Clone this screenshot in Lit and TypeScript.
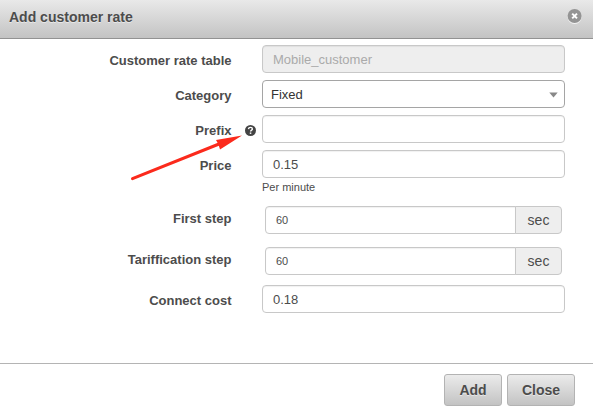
import { LitElement, html, css, svg, nothing } from "lit";
import { customElement, property } from "lit/decorators.js";

@customElement("form-row")
class FormRow extends LitElement {
  @property() label = "";
  @property({ type: Boolean }) help = false;

  static styles = css`
    :host {
      display: grid;
      grid-template-columns: 231.5px 30.5px 1fr;
      align-items: start;
    }
    .label {
      padding-top: var(--label-offset, 8px);
      text-align: right;
      font-weight: bold;
      font-size: 13px;
      line-height: 15px;
      color: #4c4c4c;
      white-space: nowrap;
    }
    .help {
      padding: 10px 0 0 13.5px;
    }
    svg {
      display: block;
    }
  `;

  render() {
    return html`
      <div class="label">${this.label}</div>
      <div class="help">
        ${this.help
          ? html`<svg width="11" height="11" viewBox="0 0 11 11">
              <circle cx="5.5" cy="5.5" r="5.5" fill="#444" />
              <path d="M3.4 4.1C3.6 2.9 4.5 2.4 5.5 2.4c1.1 0 1.9.6 1.9 1.5 0 1.3-1.8 1.2-1.8 2.6" fill="none" stroke="#fff" stroke-width="1.4" />
              <rect x="4.8" y="7.5" width="1.5" height="1.4" fill="#fff" />
            </svg>`
          : nothing}
      </div>
      <div><slot></slot></div>
    `;
  }
}

@customElement("app-root")
class AppRoot extends LitElement {
  static styles = css`
    :host {
      display: flex;
      flex-direction: column;
      position: relative;
      width: 593px;
      height: 418px;
      overflow: hidden;
      background: #fff;
      color: #4c4c4c;
      font-family: "Liberation Sans", Arial, sans-serif;
    }
    * {
      box-sizing: border-box;
    }
    header {
      display: flex;
      justify-content: space-between;
      height: 39px;
      padding: 8px 10px 0 9px;
      border-bottom: 1px solid #929292;
      background: linear-gradient(#e9e9e9, #c3c3c3);
    }
    h1 {
      margin: 0;
      font-size: 14px;
      line-height: 18px;
      text-shadow: 0 1px 0 rgba(255, 255, 255, 0.5);
    }
    svg {
      display: block;
    }
    .form {
      display: flex;
      flex-direction: column;
      gap: 7px;
      flex: 1;
      padding-top: 6px;
    }
    .field {
      display: flex;
      align-items: center;
      width: 303px;
      height: 28px;
      padding: 2px 10px 0;
      border: 1px solid #c8c8c8;
      border-radius: 4px;
      font-size: 13px;
      line-height: 18px;
      background: #fff;
      box-shadow: inset 0 1px 1px rgba(0, 0, 0, 0.06);
    }
    .disabled {
      background: #eee;
      color: #aaa;
    }
    .select {
      justify-content: space-between;
      padding: 2px 6px 0 8px;
      border-color: #a5a5a5;
      color: #333;
      box-shadow: none;
    }
    .hint {
      padding-top: 3px;
      height: 15px;
      font-size: 11px;
      line-height: 13px;
    }
    .step {
      --label-offset: 5px;
      margin-top: 6px;
    }
    .group {
      display: flex;
      width: 297px;
      height: 28px;
      margin-left: 3px;
    }
    .group .field {
      width: 251px;
      padding-top: 0;
      font-size: 11px;
      border-radius: 4px 0 0 4px;
    }
    .addon {
      display: flex;
      align-items: center;
      justify-content: center;
      width: 47px;
      margin-left: -1px;
      border: 1px solid #c8c8c8;
      border-radius: 0 4px 4px 0;
      background: #eee;
      font-size: 14px;
    }
    .cost {
      margin-top: 3px;
    }
    footer {
      display: flex;
      justify-content: flex-end;
      gap: 5px;
      height: 55px;
      padding: 10px 18px 0 0;
      border-top: 1px solid #b4b4b4;
    }
    button {
      height: 32px;
      padding: 0;
      border: 1px solid #b3b3b3;
      border-radius: 3px;
      background: linear-gradient(#ebebeb, #c3c3c3);
      color: #4c4c4c;
      font: bold 14px "Liberation Sans", Arial, sans-serif;
      text-shadow: 0 1px 0 rgba(255, 255, 255, 0.5);
    }
    .add {
      width: 58px;
    }
    .close {
      width: 68px;
    }
    .arrow {
      position: absolute;
      left: 130px;
      top: 130px;
    }
  `;

  private stepGroup(value: string) {
    return html`<div class="group">
      <div class="field">${value}</div>
      <div class="addon">sec</div>
    </div>`;
  }

  private crossLines() {
    return svg`<path d="M5.2 5.6l4.8 4.8M10 5.6l-4.8 4.8" stroke="#fff" stroke-width="2" />`;
  }

  render() {
    return html`
      <header>
        <h1>Add customer rate</h1>
        <svg width="16" height="17" viewBox="0 0 16 17">
          <circle cx="7.6" cy="9" r="7" fill="#f4f4f4" />
          <circle cx="7.6" cy="8" r="7" fill="#949494" />
          ${this.crossLines()}
        </svg>
      </header>
      <div class="form">
        <form-row label="Customer rate table"><div class="field disabled">Mobile_customer</div></form-row>
        <form-row label="Category">
          <div class="field select">
            Fixed
            <svg width="9" height="6" viewBox="0 0 9 6"><path d="M.3.5h8.4L4.5 5.5z" fill="#888" /></svg>
          </div>
        </form-row>
        <form-row label="Prefix" help><div class="field"></div></form-row>
        <form-row label="Price">
          <div class="field">0.15</div>
          <div class="hint">Per minute</div>
        </form-row>
        <form-row class="step" label="First step">${this.stepGroup("60")}</form-row>
        <form-row class="step" label="Tariffication step">${this.stepGroup("60")}</form-row>
        <form-row class="cost" label="Connect cost"><div class="field">0.18</div></form-row>
      </div>
      <footer>
        <button class="add">Add</button>
        <button class="close">Close</button>
      </footer>
      <svg class="arrow" width="114" height="52" viewBox="0 0 114 52">
        <path d="M2.5 48.7L89 14" stroke="#fb2a1c" stroke-width="3" stroke-linecap="round" />
        <path d="M112 5.5L86 10l2.5 4.5L90 19.5z" fill="#fb2a1c" />
      </svg>
    `;
  }
}
